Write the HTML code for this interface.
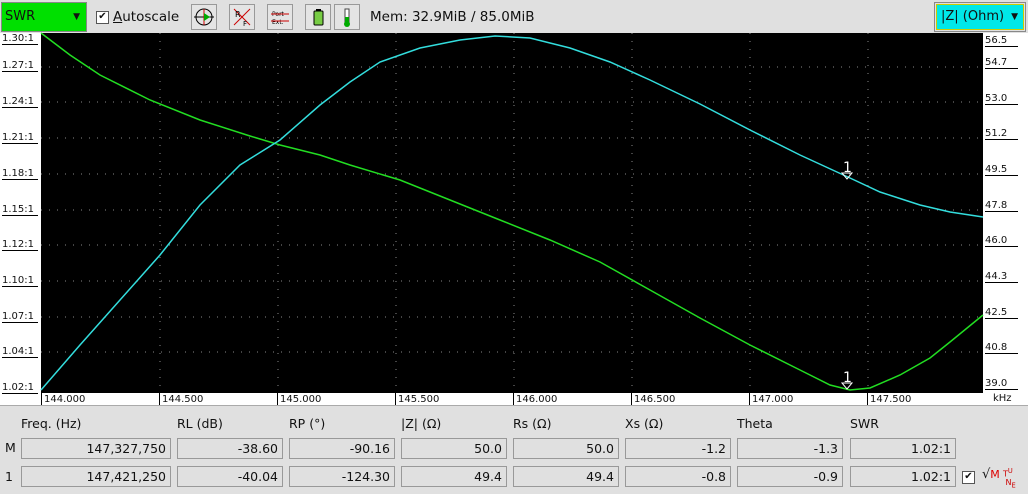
<!DOCTYPE html><html><head><style>
body{margin:0;width:1028px;height:494px;background:#e0e0e0;font-family:"DejaVu Sans","Liberation Sans",sans-serif;font-size:12px;color:#111;position:relative;overflow:hidden}
.a{position:absolute}
.btn{position:absolute;top:4px;width:26px;height:26px;border:1px solid #999;background:#e4e4e4;box-sizing:border-box}
.box{position:absolute;height:21px;border:1px solid #999;box-sizing:border-box;text-align:right;padding-right:4px;line-height:19px;font-size:12.5px;background:#e0e0e0}
.h{position:absolute;top:416px;font-size:12.5px}
.yl{position:absolute;left:2px;font-size:10px;border-bottom:1px solid #000;width:36px;line-height:11px}
.yr{position:absolute;left:985px;font-size:10px;border-bottom:1px solid #000;width:33px;line-height:11px}
.xl{position:absolute;top:393px;font-size:10px;border-left:1px solid #000;padding-left:2px;height:12px;line-height:13px}
</style></head><body>
<div class="a" style="left:0;top:0;width:1028px;height:33px;background:#e0e0e0"></div>
<div class="a" style="left:1px;top:2px;width:86px;height:30px;background:#00e000;border:1px solid #888;box-sizing:border-box;line-height:28px;padding-left:3px;font-size:13px">SWR<span style="position:absolute;right:6px;top:0;font-size:9px">▼</span></div>
<div class="a" style="left:96px;top:11px;width:11px;height:11px;border:1px solid #555;background:#fff;font-size:10px;line-height:10px;text-align:center">✔</div>
<div class="a" style="left:113px;top:9px;font-size:13.5px"><u>A</u>utoscale</div>
<div class="btn" style="left:191px"><svg width="24" height="24"><circle cx="12" cy="12" r="8" fill="none" stroke="#000"/><line x1="2" y1="12" x2="22" y2="12" stroke="#000"/><line x1="12" y1="4" x2="12" y2="20" stroke="#c00"/><path d="M12 8l6 4-6 4z" fill="#0a0"/></svg></div>
<div class="btn" style="left:229px"><svg width="24" height="24"><line x1="4" y1="4" x2="20" y2="20" stroke="#c00"/><line x1="20" y1="4" x2="4" y2="20" stroke="#c00"/><text x="5" y="12" font-size="8">R</text><text x="13" y="21" font-size="7">F</text></svg></div>
<div class="btn" style="left:267px"><svg width="24" height="24"><text x="4" y="11" font-size="6">Port</text><text x="4" y="19" font-size="6">Ext.</text><line x1="3" y1="9" x2="21" y2="9" stroke="#c00"/><line x1="3" y1="16" x2="21" y2="16" stroke="#c00"/></svg></div>
<div class="btn" style="left:305px"><svg width="24" height="24"><rect x="8" y="6" width="9" height="14" rx="1" fill="#7c4" stroke="#000"/><rect x="10" y="4" width="5" height="2" fill="#000"/></svg></div>
<div class="btn" style="left:334px"><svg width="24" height="24"><rect x="10" y="4" width="4" height="14" fill="#fff" stroke="#444"/><rect x="10" y="12" width="4" height="8" fill="#0a0"/><circle cx="12" cy="19" r="3" fill="#0a0"/></svg></div>
<div class="a" style="left:370px;top:9px;font-size:13.5px">Mem: 32.9MiB / 85.0MiB</div>
<div class="a" style="left:934px;top:2px;width:92px;height:30px;border:1px solid #888;box-sizing:border-box;padding:1px"><div style="background:#00e8e8;border:1px solid #cc0;height:26px;box-sizing:border-box;line-height:24px;padding-left:4px;font-size:13px;position:relative">|Z| (Ohm)<span style="position:absolute;right:5px;font-size:9px">▼</span></div></div>
<div class="a" style="left:0;top:33px;width:1028px;height:373px;background:#fff"></div>
<div class="a" style="left:41px;top:33px;width:942px;height:360px;background:#000"></div>
<div class="yl" style="top:33px">1.30:1</div><div class="yl" style="top:60px">1.27:1</div><div class="yl" style="top:96px">1.24:1</div><div class="yl" style="top:132px">1.21:1</div><div class="yl" style="top:168px">1.18:1</div><div class="yl" style="top:204px">1.15:1</div><div class="yl" style="top:239px">1.12:1</div><div class="yl" style="top:275px">1.10:1</div><div class="yl" style="top:311px">1.07:1</div><div class="yl" style="top:346px">1.04:1</div><div class="yl" style="top:382px">1.02:1</div>
<div class="yr" style="top:35px">56.5</div><div class="yr" style="top:57px">54.7</div><div class="yr" style="top:93px">53.0</div><div class="yr" style="top:128px">51.2</div><div class="yr" style="top:164px">49.5</div><div class="yr" style="top:200px">47.8</div><div class="yr" style="top:235px">46.0</div><div class="yr" style="top:271px">44.3</div><div class="yr" style="top:307px">42.5</div><div class="yr" style="top:342px">40.8</div><div class="yr" style="top:378px">39.0</div>
<div class="xl" style="left:41px">144.000</div><div class="xl" style="left:159px">144.500</div><div class="xl" style="left:277px">145.000</div><div class="xl" style="left:395px">145.500</div><div class="xl" style="left:513px">146.000</div><div class="xl" style="left:631px">146.500</div><div class="xl" style="left:749px">147.000</div><div class="xl" style="left:867px">147.500</div>
<div class="a" style="left:993px;top:393px;font-size:10px">kHz</div>
<div class="a" style="left:0;top:405px;width:1028px;height:1px;background:#aaa"></div>
<svg class="a" style="left:0;top:0" width="1028" height="494">
<g stroke="#888" stroke-dasharray="1 7" stroke-width="1">
<line x1="41" y1="67" x2="983" y2="67"/><line x1="41" y1="102" x2="983" y2="102"/><line x1="41" y1="138" x2="983" y2="138"/><line x1="41" y1="174" x2="983" y2="174"/><line x1="41" y1="210" x2="983" y2="210"/><line x1="41" y1="245" x2="983" y2="245"/><line x1="41" y1="281" x2="983" y2="281"/><line x1="41" y1="317" x2="983" y2="317"/><line x1="41" y1="352" x2="983" y2="352"/>
<line x1="160" y1="33" x2="160" y2="393"/><line x1="278" y1="33" x2="278" y2="393"/><line x1="396" y1="33" x2="396" y2="393"/><line x1="514" y1="33" x2="514" y2="393"/><line x1="632" y1="33" x2="632" y2="393"/><line x1="750" y1="33" x2="750" y2="393"/><line x1="868" y1="33" x2="868" y2="393"/>
</g>
<polyline fill="none" stroke="#22dd22" stroke-width="1.5" points="41,33 70,55 100,75 150,100 200,120 250,136 280,145 320,155 350,165 400,180 450,200 500,220 550,240 600,262 650,290 700,318 750,345 800,370 830,385 850,390 870,388 900,375 930,358 950,342 983,315"/>
<polyline fill="none" stroke="#33dddd" stroke-width="1.5" points="41,390 80,345 120,300 160,255 200,205 240,165 280,140 320,105 350,82 380,62 420,48 460,40 495,36 530,38 570,48 610,62 650,80 700,104 750,130 800,155 850,178 880,192 920,205 950,212 983,217"/>
<text x="843" y="172" fill="#fff" font-size="14">1</text><path d="M842 173l5 6 5-6z" fill="none" stroke="#fff"/>
<text x="843" y="382" fill="#fff" font-size="14">1</text><path d="M842 383l5 6 5-6z" fill="none" stroke="#fff"/>
</svg>
<div class="h" style="left:21px">Freq. (Hz)</div><div class="h" style="left:177px">RL (dB)</div><div class="h" style="left:289px">RP (°)</div><div class="h" style="left:401px">|Z| (Ω)</div><div class="h" style="left:513px">Rs (Ω)</div><div class="h" style="left:625px">Xs (Ω)</div><div class="h" style="left:737px">Theta</div><div class="h" style="left:850px">SWR</div>
<div class="a" style="left:5px;top:440px;font-size:12.5px">M</div><div class="a" style="left:5px;top:469px;font-size:12.5px">1</div>
<div class="box" style="left:21px;top:438px;width:150px">147,327,750</div><div class="box" style="left:177px;top:438px;width:106px">-38.60</div><div class="box" style="left:289px;top:438px;width:106px">-90.16</div><div class="box" style="left:401px;top:438px;width:106px">50.0</div><div class="box" style="left:513px;top:438px;width:106px">50.0</div><div class="box" style="left:625px;top:438px;width:106px">-1.2</div><div class="box" style="left:737px;top:438px;width:106px">-1.3</div><div class="box" style="left:850px;top:438px;width:106px">1.02:1</div>
<div class="box" style="left:21px;top:466px;width:150px">147,421,250</div><div class="box" style="left:177px;top:466px;width:106px">-40.04</div><div class="box" style="left:289px;top:466px;width:106px">-124.30</div><div class="box" style="left:401px;top:466px;width:106px">49.4</div><div class="box" style="left:513px;top:466px;width:106px">49.4</div><div class="box" style="left:625px;top:466px;width:106px">-0.8</div><div class="box" style="left:737px;top:466px;width:106px">-0.9</div><div class="box" style="left:850px;top:466px;width:106px">1.02:1</div>
<div class="a" style="left:962px;top:471px;width:11px;height:11px;border:1px solid #555;background:#fff;font-size:10px;line-height:10px;text-align:center">✔</div>
<div class="a" style="left:982px;top:467px;font-size:13px">√<span style="color:#d00;font-size:11px">M</span></div>
<div class="a" style="left:1003px;top:467px;font-size:8px;color:#c00;line-height:8px">T<sup>U</sup><br>&nbsp;N<sub>E</sub></div>
</body></html>
